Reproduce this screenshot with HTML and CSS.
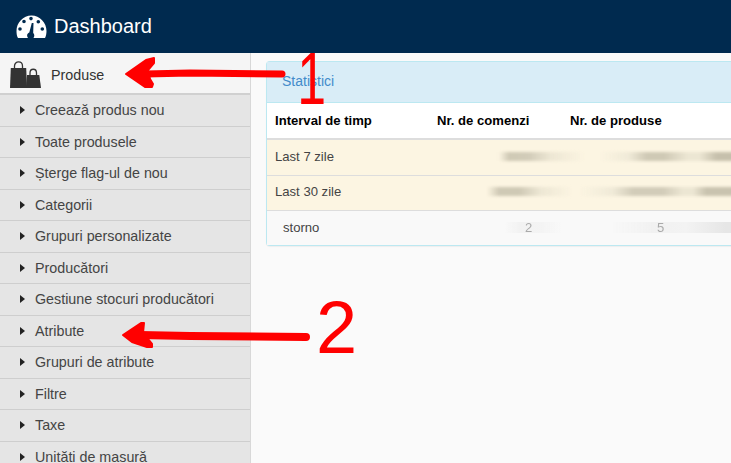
FILE: index.html
```html
<!DOCTYPE html>
<html lang="ro">
<head>
<meta charset="utf-8">
<title>Dashboard</title>
<link rel="stylesheet" href="styles.css">
</head>
<body>
<header class="topbar">
  <svg class="gauge" viewBox="0 0 31 23" width="31" height="23" aria-hidden="true">
    <path class="gauge-face" fill-rule="evenodd" d="M2 23C.8 21 .5 18.500 .5 16 .5 7.700 7.200 .5 15.500 .5S30.500 7.700 30.500 16c0 2.500-.5 5-1.500 7H17.500c.5-.7.8-1.500.8-2.400 0-1-.4-1.900-1.100-2.500L17.500 8 15.800 8 13.300 17.500c-1.300.5-2.200 1.700-2.200 3.100 0 .9.300 1.700.9 2.400ZM15 1.800a1.800 1.800 0 1 0 0 3.600 1.800 1.800 0 0 0 0-3.600ZM8 4.700a1.800 1.800 0 1 0 0 3.600 1.800 1.800 0 0 0 0-3.600Zm14.300.3a1.800 1.800 0 1 0 0 3.600 1.800 1.800 0 0 0 0-3.600ZM4 12.200a1.800 1.800 0 1 0 0 3.600 1.800 1.800 0 0 0 0-3.600Zm22.300 0a1.800 1.800 0 1 0 0 3.600 1.800 1.800 0 0 0 0-3.600Z"/>
  </svg>
  <span class="brand">Dashboard</span>
</header>
<div class="layout">
  <nav class="sidebar">
    <a class="nav-head">
      <svg class="bags" viewBox="0 0 31 28" width="31" height="28" aria-hidden="true">
        <path class="bag-dark" d="M.8 7H16.200L17 27H0Z"/>
        <path class="bag-line" d="M4.500 9V5C4.500-.5 12.500-.5 12.500 5V9"/>
        <path class="bag-dark" d="M17 14H29.300L31 27H16Z"/>
        <path class="bag-line" d="M20 16V12C20 7 26.500 7 26.500 12V16"/>
      </svg>
      <span>Produse</span>
    </a>
    <ul class="nav-list">
      <li>Creează produs nou</li>
      <li>Toate produsele</li>
      <li>Șterge flag-ul de nou</li>
      <li>Categorii</li>
      <li>Grupuri personalizate</li>
      <li>Producători</li>
      <li>Gestiune stocuri producători</li>
      <li>Atribute</li>
      <li>Grupuri de atribute</li>
      <li>Filtre</li>
      <li>Taxe</li>
      <li>Unități de masură</li>
    </ul>
  </nav>
  <main class="content">
    <section class="panel">
      <h2 class="panel-title">Statistici</h2>
      <div class="row row-head">
        <span class="c1">Interval de timp</span>
        <span class="c2">Nr. de comenzi</span>
        <span class="c3">Nr. de produse</span>
      </div>
      <div class="row row-warm">
        <span class="c1">Last 7 zile</span>
        <span class="smear orders-week"></span>
        <span class="smear products-week"></span>
      </div>
      <div class="row row-warm">
        <span class="c1">Last 30 zile</span>
        <span class="smear orders-month"></span>
        <span class="smear products-month"></span>
      </div>
      <div class="row row-plain">
        <span class="c1 indented">storno</span>
        <span class="faint faint-orders">2</span>
        <span class="faint faint-products">5</span>
      </div>
    </section>
  </main>
</div>
<svg class="marks" viewBox="0 0 731 463" width="731" height="463" aria-hidden="true">
  <path class="stroke stroke-one" d="M145 74 L190 73 L282 74"/>
  <path class="head" d="M126 74 L146 60 L154 58 L154 63 L148 70 L150 79 L153 84 L152 87 L145 87 Z"/>
  <path class="stroke stroke-two" d="M140 335 L190 336 L306 337"/>
  <path class="head" d="M123 335 L141 323 L144 323 L143 333 L152 344 L152 347 L147 347 L132 342 Z"/>
</svg>
<span class="digit digit-one">1</span>
<span class="digit digit-two">2</span>
</body>
</html>
```
FILE: styles.css
```css
* { box-sizing: border-box; }
html, body { margin: 0; padding: 0; }
body {
  width: 731px;
  height: 463px;
  overflow: hidden;
  position: relative;
  font-family: "Liberation Sans", Arial, sans-serif;
  font-size: 14px;
  color: #333;
  background: #fafafa;
}
.topbar {
  height: 53px;
  background: #002a4f;
  display: flex;
  align-items: center;
  gap: 7px;
  padding: 0 0 1px 16px;
}
.gauge-face { fill: #fff; }
.brand { color: #fff; font-size: 20px; }
.layout { display: flex; height: 410px; }
.sidebar {
  width: 251px;
  flex: none;
  background: #e5e5e5;
  border-right: 1px solid #d8d8d8;
  overflow: hidden;
  font-size: 14.300px;
}
.nav-head {
  height: 42px;
  background: #f5f5f5;
  border-bottom: 2px solid #d0d0d0;
  display: flex;
  align-items: center;
  gap: 11px;
  padding: 3px 0 0 10px;
  color: #333;
}
.bags { margin-right: -1px; }
.bag-dark { fill: #333; }
.bag-line { fill: none; stroke: #333; stroke-width: 1.300; }
.nav-list { list-style: none; margin: 0; padding: 0; }
.nav-list li {
  height: 31.500px;
  border-bottom: 1px solid #cecece;
  display: flex;
  align-items: center;
  padding-left: 35px;
  position: relative;
  color: #444;
}
.nav-list li::before {
  content: "";
  position: absolute;
  left: 20px;
  top: 11px;
  border-left: 5px solid #222;
  border-top: 4.500px solid transparent;
  border-bottom: 4.500px solid transparent;
}
.content { flex: 1; padding: 8px 0 0 15px; overflow: hidden; }
.panel {
  width: 480px;
  height: 185px;
  border: 1px solid #bce8f1;
  border-right: 0;
  border-radius: 4px 0 0 4px;
  background: #fff;
  box-shadow: 0 1px 1px rgba(0, 0, 0, .05);
}
.panel-title {
  margin: 0;
  height: 41px;
  background: #d9edf7;
  border-bottom: 1px solid #bce8f1;
  color: #428bca;
  font-size: 14px;
  font-weight: normal;
  line-height: 39px;
  padding-left: 15px;
}
.row {
  display: grid;
  grid-template-columns: 162px 133px 1fr;
  align-items: center;
  padding-left: 8px;
  font-size: 13.100px;
}
.row-head {
  height: 37px;
  font-weight: bold;
  color: #000;
  border-bottom: 2px solid #ddd;
}
.row-warm {
  height: 35.500px;
  background: #fcf5e2;
  border-bottom: 1px solid #ddd;
  color: #444;
  padding-bottom: 2px;
}
.row-plain { height: 34px; background: #f9f9f9; color: #444; padding-bottom: 2px; }
.indented { padding-left: 8px; }
.smear {
  display: block;
  height: 9px;
  filter: blur(1.500px);
}
.orders-week {
  width: 85px;
  margin-left: 62px;
  background: linear-gradient(90deg, transparent, #cfc9b5 12%, #d2ccb9 35%, #ece6d3 60%, transparent);
}
.products-week {
  width: 146px;
  margin-left: 30px;
  background: linear-gradient(90deg, transparent, #efe9d7 20%, #cfc9b5 32%, #cfc9b5 44%, #ece6d3 60%, #ece6d3 68%, #c6c0ac 80%, #c6c0ac 100%);
}
.orders-month {
  width: 85px;
  margin-left: 50px;
  background: linear-gradient(90deg, transparent, #cfc9b5 14%, #cfc9b5 38%, #ece6d3 62%, transparent);
}
.products-month {
  width: 166px;
  margin-left: 10px;
  background: linear-gradient(90deg, transparent, #efe9d7 20%, #d2ccb9 32%, #d2ccb9 50%, #ece6d3 62%, #ece6d3 68%, #c9c3af 76%, #c9c3af 100%);
}
.faint {
  display: block;
  line-height: 11px;
  color: #aaa;
  filter: blur(.400px);
}
.faint-orders {
  margin-left: 68px;
  padding-left: 20px;
  width: 56px;
  background: linear-gradient(90deg, transparent, #f2f2f2 25%, #f4f4f4 70%, transparent);
}
.faint-products {
  margin-left: 42px;
  padding-left: 45px;
  width: 134px;
  background: linear-gradient(90deg, transparent, #f1f1f1 30%, #f3f3f3 55%, #e6e6e6 85%, #e6e6e6 100%);
}
.marks { position: absolute; left: 0; top: 0; pointer-events: none; }
.stroke { fill: none; stroke: #f00; stroke-linecap: round; }
.stroke-one { stroke-width: 7; }
.stroke-two { stroke-width: 8; }
.head { fill: #f00; stroke: #f00; stroke-width: 2; stroke-linejoin: round; }
.digit {
  position: absolute;
  color: #f00;
  font-size: 74px;
  line-height: 1;
}
.digit-one { left: 291px; top: 42px; transform: scaleX(.7); }
.digit-two { left: 316px; top: 291px; }
```
